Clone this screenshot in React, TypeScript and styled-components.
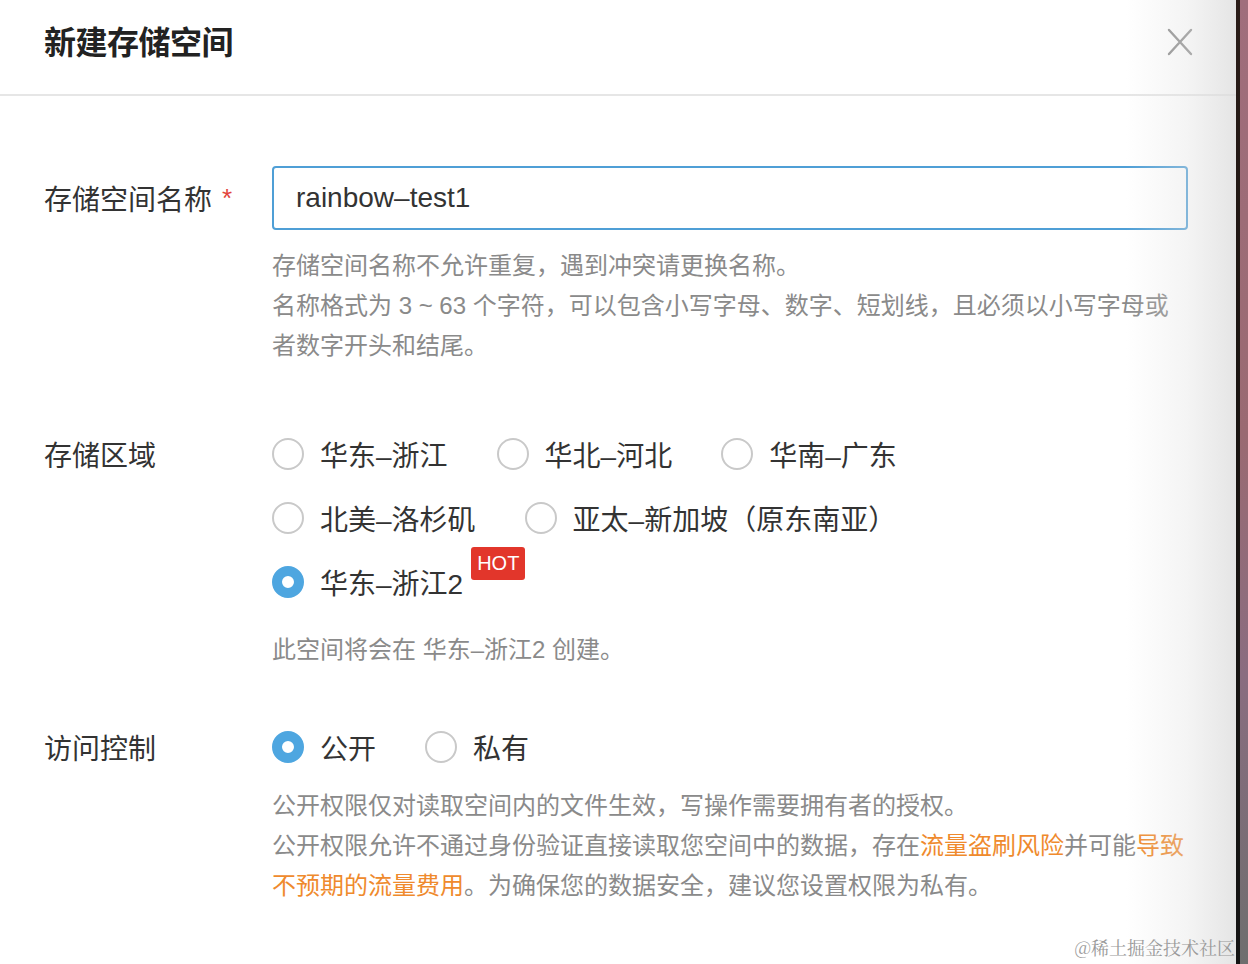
import React from 'react';
import styled, { createGlobalStyle } from 'styled-components';

const GlobalStyle = createGlobalStyle`
  html, body {
    margin: 0;
    padding: 0;
    height: 100%;
    overflow: hidden;
    background: #fff;
  }
  body {
    font-family: "Liberation Sans", "Noto Sans CJK SC", "Noto Sans", sans-serif;
    -webkit-font-smoothing: antialiased;
  }
`;

const Page = styled.div`
  display: flex;
  width: 1248px;
  height: 964px;
`;

const Panel = styled.div`
  position: relative;
  flex: 1;
  background: #fff;
  overflow: hidden;
`;

const EdgeShade = styled.div`
  position: absolute;
  top: 0;
  right: 0;
  bottom: 0;
  width: 110px;
  pointer-events: none;
  background: linear-gradient(to right, rgba(225, 225, 225, 0) 0%, rgba(225, 225, 225, 0.35) 55%, rgba(220, 220, 220, 0.75) 100%);
`;

const Backdrop = styled.div`
  display: flex;
  width: 12px;
`;

const DarkStrip = styled.div`
  width: 4px;
  background: linear-gradient(to bottom, #2a1c18, #1b1512 40%, #141414 100%);
`;

const Mauve = styled.div`
  flex: 1;
  background: linear-gradient(to bottom, #a06e7c 0%, #9a6a72 45%, #8a6d80 70%, #6e6e6e 100%);
`;

const Header = styled.div`
  display: flex;
  align-items: center;
  justify-content: space-between;
  height: 96px;
  padding: 0 44px;
  border-bottom: 2px solid #e6e6e6;
  box-sizing: border-box;
`;

const Title = styled.h1`
  margin: 0;
  font-family: "Noto Sans CJK SC", sans-serif;
  font-size: 32px;
  font-weight: 700;
  color: #222;
  letter-spacing: -0.5px;
  transform: translateY(-7px);
`;

const CloseButton = styled.button`
  display: flex;
  border: 0;
  padding: 0;
  margin-right: -2px;
  background: transparent;
  cursor: pointer;
  transform: translateY(-5px);
`;

const Body = styled.div`
  padding: 70px 48px 0 44px;
`;

const Field = styled.div<{ $gap: number }>`
  display: grid;
  grid-template-columns: 228px 1fr;
  margin-bottom: ${(p) => p.$gap}px;
`;

const Label = styled.div<{ $height: number }>`
  display: flex;
  align-items: center;
  height: ${(p) => p.$height}px;
  font-size: 28px;
  color: #333;
`;

const Required = styled.span`
  color: #e2443c;
  margin-left: 10px;
  font-size: 26px;
`;

const Control = styled.div`
  display: flex;
  flex-direction: column;
`;

const Input = styled.div`
  display: flex;
  align-items: center;
  height: 64px;
  padding: 0 22px;
  border: 2px solid #4f9fd6;
  border-radius: 4px;
  box-sizing: border-box;
  font-size: 28px;
  color: #333;
`;

const Help = styled.div<{ $top: number }>`
  margin-top: ${(p) => p.$top}px;
  font-size: 24px;
  line-height: 40px;
  color: #8a8a8a;
  white-space: nowrap;
`;

const Warn = styled.span`
  color: #ef8a2d;
`;

const RadioRow = styled.div`
  display: flex;
  align-items: center;
  height: 64px;
`;

const RadioOption = styled.label`
  display: flex;
  align-items: center;
  height: 64px;
  margin-right: 49px;
  font-size: 28px;
  color: #333;
  cursor: pointer;
`;

const Circle = styled.span<{ $checked?: boolean }>`
  width: 32px;
  height: 32px;
  border-radius: 50%;
  box-sizing: border-box;
  margin-right: 16px;
  flex-shrink: 0;
  border: ${(p) => (p.$checked ? '10px solid #4ea6e0' : '2px solid #c9c9c9')};
  background: #fff;
`;

const Hot = styled.span`
  align-self: flex-start;
  margin-top: -3px;
  margin-left: 8px;
  padding: 0 6px;
  height: 33px;
  line-height: 33px;
  border-radius: 3px;
  background: #e2362b;
  color: #fff;
  font-size: 20px;
`;

const Watermark = styled.div`
  position: absolute;
  right: 1px;
  bottom: 4px;
  font-family: "Noto Serif CJK SC", "Liberation Serif", "Noto Sans CJK SC", serif;
  font-size: 18px;
  color: #9a9a9a;
  z-index: 2;
`;

interface RadioProps {
  label: string;
  checked?: boolean;
  hot?: boolean;
}

const Radio = ({ label, checked, hot }: RadioProps) => (
  <RadioOption>
    <Circle $checked={checked} />
    {label}
    {hot && <Hot>HOT</Hot>}
  </RadioOption>
);

const CloseIcon = () => (
  <svg width="28" height="28" viewBox="0 0 28 28">
    <path d="M3 2 L25 26 M25 2 L3 26" stroke="#8a8a8a" strokeWidth="2.4" strokeLinecap="round" />
  </svg>
);

export default function App() {
  return (
    <>
      <GlobalStyle />
      <Page>
        <Panel>
          <Header>
            <Title>新建存储空间</Title>
            <CloseButton aria-label="close">
              <CloseIcon />
            </CloseButton>
          </Header>
          <Body>
            <Field $gap={56}>
              <Label $height={64}>
                存储空间名称<Required>*</Required>
              </Label>
              <Control>
                <Input>rainbow–test1</Input>
                <Help $top={16}>
                  存储空间名称不允许重复，遇到冲突请更换名称。
                  <br />
                  名称格式为 3 ~ 63 个字符，可以包含小写字母、数字、短划线，且必须以小写字母或
                  <br />
                  者数字开头和结尾。
                </Help>
              </Control>
            </Field>

            <Field $gap={45}>
              <Label $height={64}>存储区域</Label>
              <Control>
                <RadioRow>
                  <Radio label="华东–浙江" />
                  <Radio label="华北–河北" />
                  <Radio label="华南–广东" />
                </RadioRow>
                <RadioRow>
                  <Radio label="北美–洛杉矶" />
                  <Radio label="亚太–新加坡（原东南亚）" />
                </RadioRow>
                <RadioRow>
                  <Radio label="华东–浙江2" checked hot />
                </RadioRow>
                <Help $top={16}>此空间将会在 华东–浙江2 创建。</Help>
              </Control>
            </Field>

            <Field $gap={0}>
              <Label $height={64}>访问控制</Label>
              <Control>
                <RadioRow>
                  <Radio label="公开" checked />
                  <Radio label="私有" />
                </RadioRow>
                <Help $top={7}>
                  公开权限仅对读取空间内的文件生效，写操作需要拥有者的授权。
                  <br />
                  公开权限允许不通过身份验证直接读取您空间中的数据，存在<Warn>流量盗刷风险</Warn>并可能<Warn>导致</Warn>
                  <br />
                  <Warn>不预期的流量费用</Warn>。为确保您的数据安全，建议您设置权限为私有。
                </Help>
              </Control>
            </Field>
          </Body>
          <EdgeShade />
          <Watermark>@稀土掘金技术社区</Watermark>
        </Panel>
        <Backdrop>
          <DarkStrip />
          <Mauve />
        </Backdrop>
      </Page>
    </>
  );
}
